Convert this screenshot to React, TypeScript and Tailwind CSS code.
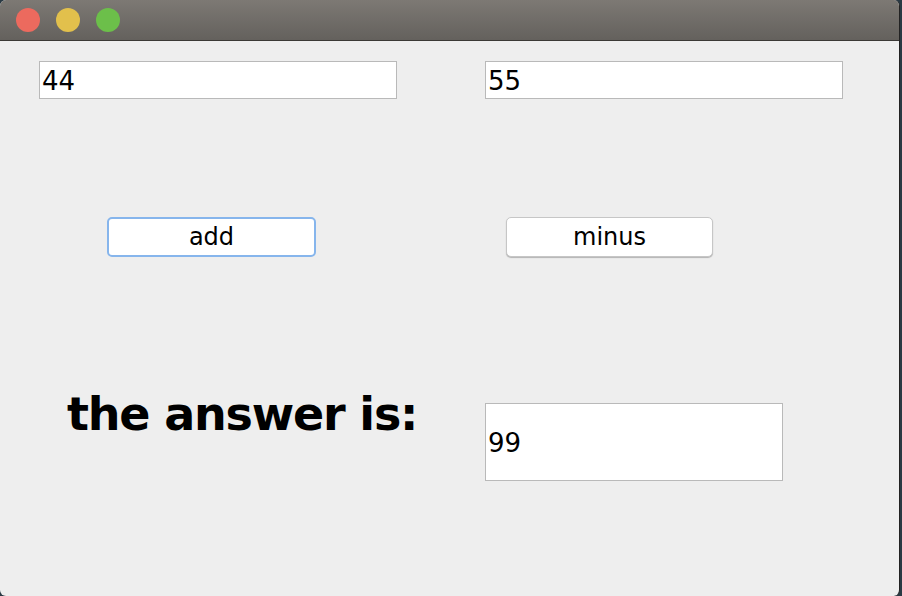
const font = { fontFamily: '"DejaVu Sans", "Liberation Sans", sans-serif' };

const TextBox = ({ value, className }: { value: string; className: string }) => (
   <div className={`bg-white border border-[#b9b9b9] flex items-center pl-[2px] text-[26px] leading-none text-black ${className}`}>
      {value}
   </div>
);

const App = () => {
   return (
      <div className="w-[902px] h-[596px] bg-[#2a3a44] overflow-hidden" style={font}>
         <div className="w-[900px] h-[596px] rounded-[6px] overflow-hidden flex flex-col bg-[#eeeeee] border-r border-[#222]">
            {/* title bar */}
            <div className="h-[41px] bg-gradient-to-b from-[#7d7974] to-[#64615d] border-b border-[#3b3936] flex items-center gap-[16px] pl-[16px] shrink-0">
               <span className="w-[24px] h-[24px] rounded-full bg-[#ec6a5e]" />
               <span className="w-[24px] h-[24px] rounded-full bg-[#e2c04c]" />
               <span className="w-[24px] h-[24px] rounded-full bg-[#6cbf4a]" />
            </div>

            <div className="flex mt-[20px]">
               <TextBox value="44" className="ml-[39px] w-[358px] h-[38px] pt-[2px]" />
               <TextBox value="55" className="ml-[88px] w-[358px] h-[38px] pt-[2px]" />
            </div>

            <div className="flex mt-[118px]">
               <button className="ml-[107px] w-[209px] h-[40px] bg-white rounded-[5px] border-2 border-[#86b5ec] text-[24px] text-black leading-none pb-[1px]">
                  add
               </button>
               <button className="ml-[190px] w-[207px] h-[40px] bg-white rounded-[5px] border border-[#c6c6c6] shadow-[0_1px_1px_rgba(0,0,0,0.25)] text-[24px] text-black leading-none pb-[1px]">
                  minus
               </button>
            </div>

            <div className="flex mt-[133px]">
               <div className="ml-[67px] w-[418px] text-[46px] font-bold leading-none text-black h-[48px] flex items-center tracking-[-1.2px]">
                  the answer is:
               </div>
               <TextBox value="99" className="mt-[13px] w-[298px] h-[78px] pt-[2px]" />
            </div>
         </div>
      </div>
   );
};

export default App;
